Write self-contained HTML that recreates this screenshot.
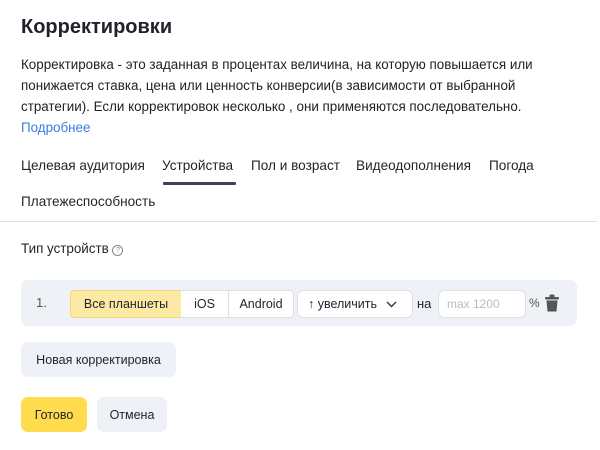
<!DOCTYPE html>
<html><head><meta charset="utf-8"><style>
body{margin:0;width:600px;height:450px;background:#fff;font-family:"Liberation Sans",sans-serif;color:#1f2329;position:relative;overflow:hidden}
.a{position:absolute;white-space:nowrap}
h1{position:absolute;left:21px;top:16px;margin:0;font-size:20px;font-weight:bold;color:#1f2329}
.p{font-size:13.4px;line-height:21px;left:21px;top:54px;color:#222}
.tab{font-size:13.6px;top:158px}
.btn{position:absolute;background:#eef1f5;border-radius:7px;font-size:12.5px;display:flex;align-items:center;justify-content:center}
.seg{position:absolute;top:290px;height:28px;border:1px solid #dcdfe3;box-sizing:border-box;font-size:12.5px;display:flex;align-items:center;justify-content:center;background:#fff}
</style></head><body>
<h1>Корректировки</h1>
<div class="a p">Корректировка - это заданная в процентах величина, на которую повышается или<br>понижается ставка, цена или ценность конверсии(в зависимости от выбранной<br>стратегии). Если корректировок несколько , они применяются последовательно.<br><span style="color:#3a7de0">Подробнее</span></div>
<div class="a tab" style="left:21px">Целевая аудитория</div>
<div class="a tab" style="left:162px">Устройства</div>
<div class="a" style="left:163px;top:182px;width:73px;height:3px;background:#3b4350;border-radius:1px"></div>
<div class="a tab" style="left:251px">Пол и возраст</div>
<div class="a tab" style="left:356px">Видеодополнения</div>
<div class="a tab" style="left:489px">Погода</div>
<div class="a tab" style="left:21px;top:194px">Платежеспособность</div>
<div class="a" style="left:0;top:221px;width:597px;height:1px;background:#dcdfe3"></div>
<div class="a" style="left:21px;top:241px;font-size:13.4px">Тип устройств <span style="display:inline-block;width:9px;height:9px;border:1px solid #888;border-radius:50%;font-size:7px;line-height:9px;text-align:center;color:#888;vertical-align:1px">?</span></div>
<div class="a" style="left:21px;top:280px;width:556px;height:46px;background:#eef1f5;border-radius:7px"></div>
<div class="a" style="left:36px;top:295px;font-size:13px;color:#555">1.</div>
<div class="seg" style="left:70px;width:112px;background:#fde9a4;border-color:#f0d77a;border-radius:4px 0 0 4px">Все планшеты</div>
<div class="seg" style="left:181px;width:48px;border-left:none">iOS</div>
<div class="seg" style="left:228px;width:66px;border-radius:0 4px 4px 0">Android</div>
<div class="seg" style="left:297px;width:116px;border-radius:6px;justify-content:flex-start;padding-left:10px">↑ увеличить <svg width="11" height="7" style="margin-left:9px" viewBox="0 0 11 7"><path d="M1 1l4.5 4.5L10 1" fill="none" stroke="#333" stroke-width="1.4"/></svg></div>
<div class="a" style="left:417px;top:296px;font-size:13px">на</div>
<div class="seg" style="left:438px;width:88px;border-radius:6px;justify-content:flex-start;padding-left:8px;color:#b8bcc2;font-size:12px">max 1200</div>
<div class="a" style="left:529px;top:296px;font-size:12px;color:#555">%</div>
<svg class="a" style="left:545px;top:294px" width="14" height="18" viewBox="0 0 14 18"><rect x="4.5" y="0.5" width="5" height="3" rx="1" fill="#555"/><rect x="0" y="3" width="14" height="2.5" rx="1" fill="#555"/><path d="M1.5 6.5h11l-1 11h-9z" fill="#555"/></svg>
<div class="btn" style="left:21px;top:342px;width:155px;height:35px">Новая корректировка</div>
<div class="btn" style="left:21px;top:397px;width:66px;height:35px;background:#ffdc4d">Готово</div>
<div class="btn" style="left:97px;top:397px;width:70px;height:35px">Отмена</div>
</body></html>
